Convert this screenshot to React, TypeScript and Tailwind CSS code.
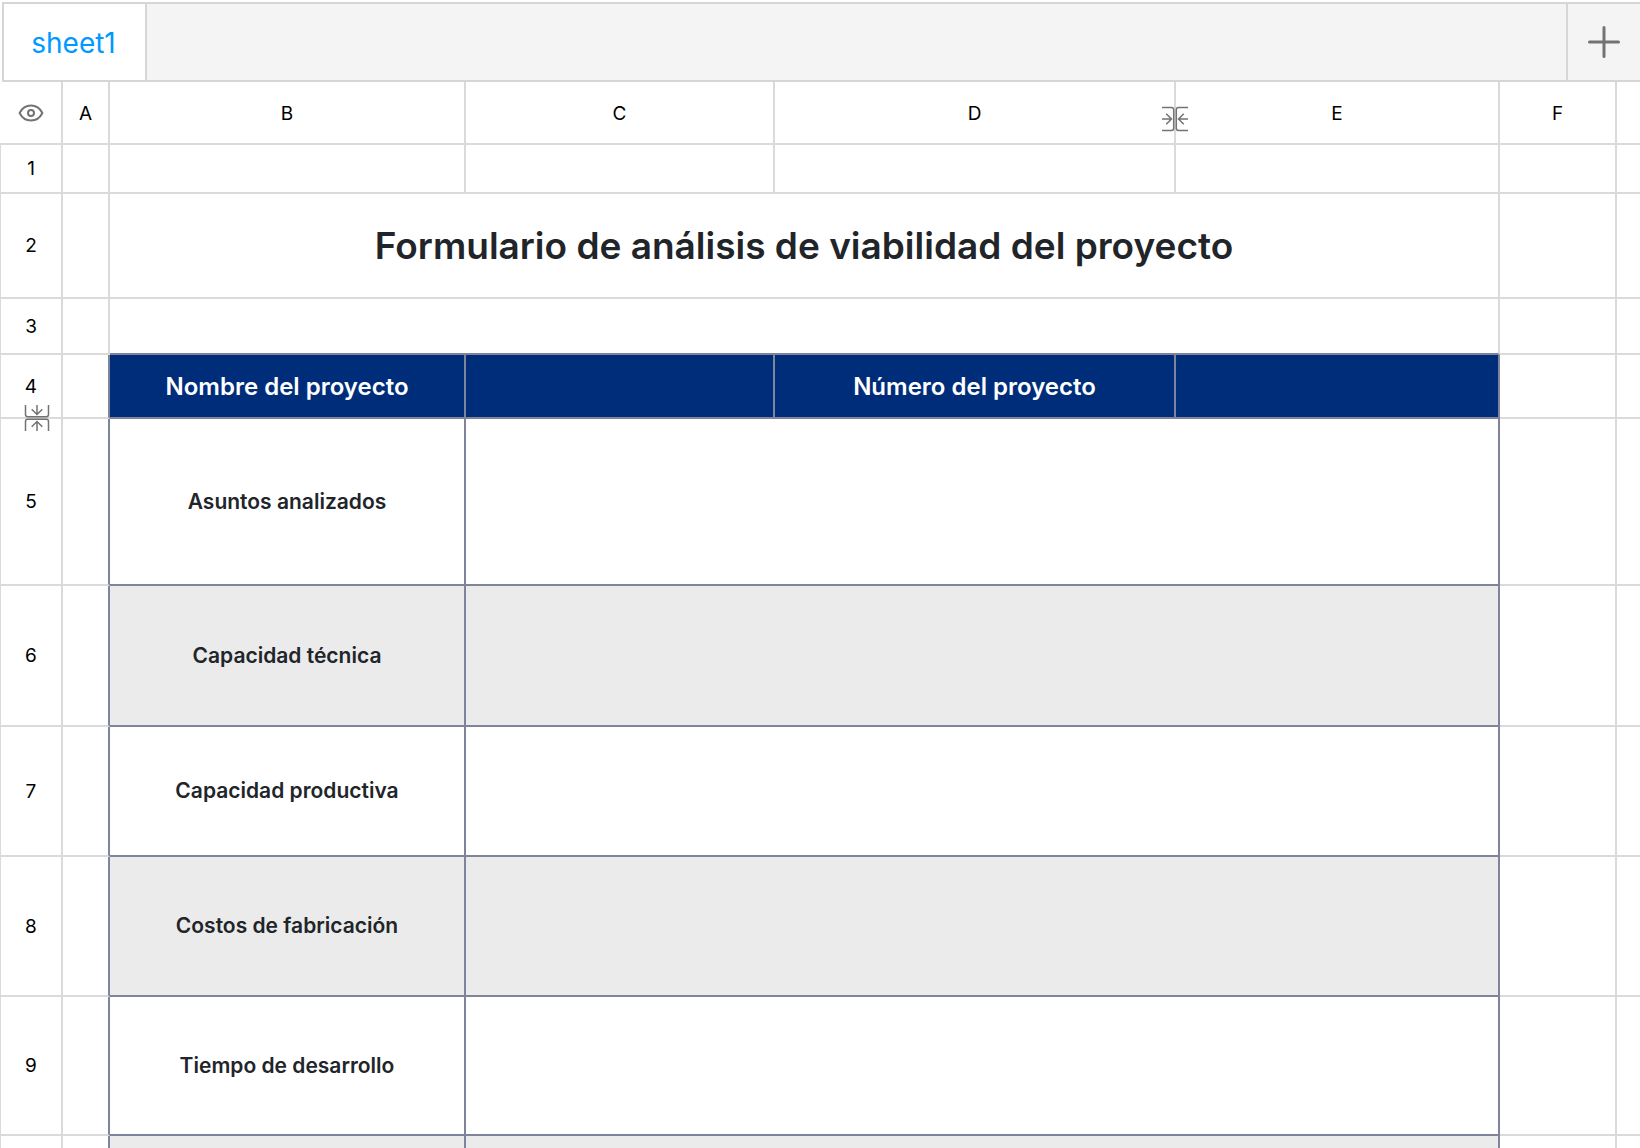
import React from "react";

const line = "border-[#dadada]";
const dark = "border-[#80849a]";

function EyeIcon() {
  return (
    <svg width="26" height="20" viewBox="0 0 26 20" fill="none" stroke="#737373" strokeWidth="2" aria-hidden="true">
      <path d="M1.6 10C4 5.2 8.2 2.5 13 2.5S22 5.2 24.4 10C22 14.8 17.8 17.5 13 17.5S4 14.8 1.6 10Z" strokeLinejoin="round" />
      <circle cx="13" cy="10" r="3" />
    </svg>
  );
}

function ResizeIcon({ className }: { className: string }) {
  return (
    <svg className={className} width="26" height="26" viewBox="0 0 26 26" fill="none" stroke="#737373" strokeWidth="1.5" aria-hidden="true">
      <path d="M0 1.500H9.500Q11.700 1.500 11.700 3.700V22.300Q11.700 24.500 9.500 24.500H0" />
      <path d="M26 1.500H16.500Q14.300 1.500 14.300 3.700V22.300Q14.300 24.500 16.500 24.500H26" />
      <path d="M0 13H9.500M4.200 7.700L9.500 13L4.200 18.300" />
      <path d="M26 13H16.500M21.800 7.700L16.500 13L21.800 18.300" />
    </svg>
  );
}

function RowHead({ n, children }: { n: number; children?: React.ReactNode }) {
  return (
    <th scope="row" className={`relative border-r-2 border-b-2 border-l ${line} pt-0.5 text-[19px] font-normal text-black`}>
      {n}
      {children}
    </th>
  );
}

const topics = [
  { n: 5, label: "Asuntos analizados", height: "h-[167px]", fill: "bg-white" },
  { n: 6, label: "Capacidad técnica", height: "h-[141px]", fill: "bg-[#ebebeb]" },
  { n: 7, label: "Capacidad productiva", height: "h-[130px]", fill: "bg-white" },
  { n: 8, label: "Costos de fabricación", height: "h-[140px]", fill: "bg-[#ebebeb]" },
  { n: 9, label: "Tiempo de desarrollo", height: "h-[139px]", fill: "bg-white" },
  { n: 10, label: "", height: "h-[140px]", fill: "bg-[#ebebeb]" },
];

export default function App() {
  const plain = `border-r-2 border-b-2 ${line}`;
  const edge = `border-r-2 border-b-2 border-b-[#dadada] border-r-[#80849a]`;
  const boxed = `border-r-2 border-b-2 ${dark}`;
  const tail = `border-b-2 ${line}`;
  const head = `border-r-2 border-b-2 ${line} pt-1 text-[19px] font-normal text-black`;

  return (
    <div className="h-screen overflow-hidden bg-white font-['Inter',sans-serif] text-[#212529]">
      <nav className="mt-0.5 ml-0.5 flex h-20 border-y-2 border-l-2 border-[#d6d6d6] bg-[#f4f4f4]">
        <button type="button" className="w-[143px] border-r-2 border-[#d6d6d6] bg-white pt-0.5 pr-0.5 text-[28px] text-[#0099ff]">
          sheet1
        </button>
        <button
          type="button"
          aria-label="Agregar hoja"
          className="ml-auto flex w-[74px] items-center justify-center border-l-2 border-[#d6d6d6]"
        >
          <svg width="32" height="32" viewBox="0 0 32 32" stroke="#737373" strokeWidth="3" strokeLinecap="round" aria-hidden="true">
            <path d="M16 1.500V30.500M1.500 16H30.500" />
          </svg>
        </button>
      </nav>

      <table className="w-full table-fixed border-separate border-spacing-0">
        <colgroup>
          <col className="w-[63px]" />
          <col className="w-[47px]" />
          <col className="w-[356px]" />
          <col className="w-[309px]" />
          <col className="w-[401px]" />
          <col className="w-[324px]" />
          <col className="w-[117px]" />
          <col />
        </colgroup>
        <thead>
          <tr className="h-[63px]">
            <th className={plain}>
              <button type="button" aria-label="Mostrar u ocultar" className="flex w-full justify-center">
                <EyeIcon />
              </button>
            </th>
            <th scope="col" className={head}>A</th>
            <th scope="col" className={head}>B</th>
            <th scope="col" className={head}>C</th>
            <th scope="col" className={`relative ${head}`}>
              D
              <ResizeIcon className="absolute top-6 -right-3.5 z-10" />
            </th>
            <th scope="col" className={head}>E</th>
            <th scope="col" className={head}>F</th>
            <td className={tail} />
          </tr>
        </thead>
        <tbody>
          <tr className="h-[49px]">
            <RowHead n={1} />
            <td className={plain} />
            <td className={plain} />
            <td className={plain} />
            <td className={plain} />
            <td className={plain} />
            <td className={plain} />
            <td className={tail} />
          </tr>
          <tr className="h-[105px]">
            <RowHead n={2} />
            <td className={plain} />
            <td colSpan={4} className={`${plain} text-center text-[37px] leading-12 font-semibold`}>
              Formulario de análisis de viabilidad del proyecto
            </td>
            <td className={plain} />
            <td className={tail} />
          </tr>
          <tr className="h-14">
            <RowHead n={3} />
            <td className={plain} />
            <td colSpan={4} className="border-r-2 border-b-2 border-r-[#dadada] border-b-[#80849a]" />
            <td className={plain} />
            <td className={tail} />
          </tr>
          <tr className="h-16 text-center text-2xl font-semibold text-white">
            <RowHead n={4}>
              <ResizeIcon className="absolute -bottom-3.5 left-[23px] z-10 rotate-90" />
            </RowHead>
            <td className={edge} />
            <td className={`${boxed} bg-[#002d7a] pt-0.5`}>Nombre del proyecto</td>
            <td className={`${boxed} bg-[#002d7a]`} />
            <td className={`${boxed} bg-[#002d7a] pt-0.5`}>Número del proyecto</td>
            <td className={`${boxed} bg-[#002d7a]`} />
            <td className={plain} />
            <td className={tail} />
          </tr>
          {topics.map((t) => (
            <tr key={t.n} className={t.height}>
              {t.label ? <RowHead n={t.n} /> : <th className={`border-r-2 border-b-2 border-l ${line}`} />}
              <td className={edge} />
              <td className={`${boxed} ${t.fill} text-center text-[21px] font-semibold`}>{t.label}</td>
              <td colSpan={3} className={`${boxed} ${t.fill}`} />
              <td className={plain} />
              <td className={tail} />
            </tr>
          ))}
        </tbody>
      </table>
    </div>
  );
}
